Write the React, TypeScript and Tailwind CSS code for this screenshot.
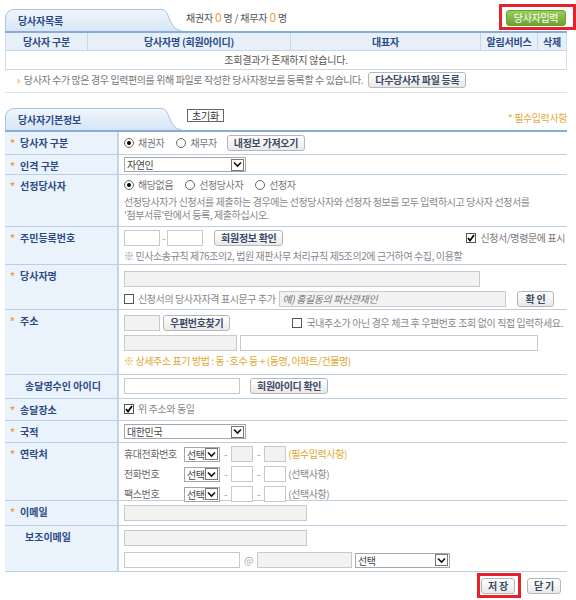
import React from "react";

const font = "font-['Noto_Sans_CJK_KR','Liberation_Sans',sans-serif]";

function Tab({ title, id }: { title: string; id: string }) {
  return (
    <div className="flex items-end h-[22px]">
      <div className="h-full w-[154px] rounded-tl-[9px] border-l border-t border-[#a9c3e0] bg-linear-to-b from-[#f1f6fc] to-[#d6e5f5] pl-[12px] flex items-center text-[10px] leading-none tracking-[-0.2px] font-bold text-[#2b4a85]">
        {title}
      </div>
      <svg width="22" height="22" viewBox="0 0 22 22" className="block">
        <defs>
          <linearGradient id={id} x1="0" y1="0" x2="0" y2="1">
            <stop offset="0" stopColor="#f1f6fc" />
            <stop offset="1" stopColor="#d6e5f5" />
          </linearGradient>
        </defs>
        <path d="M0 0.5 H3 C11 0.5 10 21.5 22 21.5 V22 H0 Z" fill={`url(#${id})`} />
        <path d="M0 0.5 H3 C11 0.5 10 21.5 22 21.5" stroke="#a9c3e0" fill="none" />
      </svg>
    </div>
  );
}

function Btn({ children, className = "" }: { children: React.ReactNode; className?: string }) {
  return (
    <button
      className={`h-[16px] px-[6px] rounded-[3px] border border-[#b7b7b7] bg-linear-to-b from-white to-[#e9e9e9] text-[10px] tracking-[-0.3px] leading-none font-bold text-[#3a4a66] whitespace-nowrap shrink-0 ${className}`}
    >
      {children}
    </button>
  );
}

function Radio({ checked }: { checked?: boolean }) {
  return (
    <span className="inline-flex w-[10px] h-[10px] rounded-full border border-[#666] bg-white items-center justify-center shrink-0">
      {checked && <span className="w-[4px] h-[4px] rounded-full bg-black" />}
    </span>
  );
}

function Check({ checked }: { checked?: boolean }) {
  return (
    <span className="inline-flex w-[10px] h-[10px] border border-[#555] bg-white items-center justify-center shrink-0">
      {checked && (
        <svg width="8" height="8" viewBox="0 0 8 8">
          <path d="M1 4 L3 6.5 L7 1" stroke="#000" strokeWidth="1.7" fill="none" />
        </svg>
      )}
    </span>
  );
}

function Select({ value, className }: { value: string; className: string }) {
  return (
    <div className={`flex h-[15px] border border-[#a7a7a7] bg-white items-center shrink-0 ${className}`}>
      <span className="flex-1 pl-[2px] text-[10px] leading-[13px] text-[#444] whitespace-nowrap">{value}</span>
      <span className="w-[13px] h-[12px] mr-[1px] border border-[#777] flex items-center justify-center shrink-0">
        <svg width="9" height="7" viewBox="0 0 9 7">
          <path d="M1 1.5 L4.5 5 L8 1.5" stroke="#111" strokeWidth="1.6" fill="none" />
        </svg>
      </span>
    </div>
  );
}

function Input({ className, gray }: { className: string; gray?: boolean }) {
  return (
    <div
      className={`h-[16px] shrink-0 border border-[#c9c9c9] ${gray ? "bg-[#f2f2f2]" : "bg-white"} ${className}`}
    />
  );
}

function Row({
  label,
  req = true,
  h,
  children,
}: {
  label: string;
  req?: boolean;
  h: string;
  children: React.ReactNode;
}) {
  return (
    <div className={`flex border-b border-[#bccfe2] ${h}`}>
      <div className="w-[114px] shrink-0 bg-[#eaf2fb] border-r-2 border-[#c2d5e8] flex pt-[6px] pl-[5px] text-[10px] tracking-[0px] font-bold text-[#2b4a85] leading-none whitespace-nowrap">
        <span className="w-[10px] text-[#f0a030]">{req ? "*" : ""}</span>
        <span className={req ? "" : "pl-[5px]"}>{label}</span>
      </div>
      <div className="flex-1 pl-[5px] pt-[3px] text-[10px] text-[#666] leading-none whitespace-nowrap">{children}</div>
    </div>
  );
}

export default function App() {
  return (
    <div className={`w-[576px] h-[600px] bg-white pl-[5px] pr-[9px] pt-[9px] tracking-[-0.4px] ${font}`}>
      {/* 당사자목록 */}
      <div className="flex items-end justify-between h-[22px]">
        <div className="flex items-end h-[22px]">
          <Tab title="당사자목록" id="t1" />
          <div className="self-start pt-[1px] pl-[5px] text-[10px] leading-[13px] text-[#555] whitespace-nowrap tracking-[-0.2px]">
            채권자 <span className="text-[#f0a030] text-[12px]">0</span> 명 / 채무자{" "}
            <span className="text-[#f0a030] text-[12px]">0</span> 명
          </div>
        </div>
        <div className="relative mb-[5px] mr-[1px]">
          <button className="block h-[16px] w-[60px] rounded-[3px] border border-[#6a9d32] bg-linear-to-b from-[#9ccd5c] to-[#6aa52c] text-[10px] tracking-[-0.3px] leading-none text-white whitespace-nowrap">
            당사자입력
          </button>
          <div className="absolute -left-[7px] -top-[6px] w-[77px] h-[26px] border-[3px] border-[#e3222b]" />
        </div>
      </div>
      <div className="border-t-2 border-[#87acd7]" />
      <div className="border-x border-[#d3dde8] text-[10px] tracking-[-0.2px] leading-none">
        <div className="flex h-[18px] bg-[#e7eff8] font-bold text-[#2b4a85] border-b border-[#c9d8e7] items-stretch whitespace-nowrap">
          <div className="w-[82px] flex items-center justify-center border-r border-[#c9d8e7]">당사자 구분</div>
          <div className="w-[203px] flex items-center justify-center border-r border-[#c9d8e7]">당사자명 (회원아이디)</div>
          <div className="w-[190px] flex items-center justify-center border-r border-[#c9d8e7]">대표자</div>
          <div className="w-[57px] flex items-center justify-center border-r border-[#c9d8e7]">알림서비스</div>
          <div className="flex-1 flex items-center justify-center">삭제</div>
        </div>
        <div className="h-[19px] flex items-center justify-center text-[#555] border-b border-[#c9d8e7]">
          조회결과가 존재하지 않습니다.
        </div>
      </div>
      <div className="flex items-center h-[20px] pl-[12px] text-[10px] leading-none text-[#777] whitespace-nowrap">
        <span className="text-[#f0a030] mr-[4px] text-[10px] font-bold">›</span>
        당사자 수가 많은 경우 입력편의를 위해 파일로 작성한 당사자정보를 등록할 수 있습니다.
        <Btn className="ml-[5px]">다수당사자 파일 등록</Btn>
      </div>
      <div className="border-t border-[#e3e3e3] mt-[2px]" />

      {/* 당사자기본정보 */}
      <div className="flex items-end justify-between mt-[15px] h-[22px]">
        <div className="flex items-end h-[22px]">
          <Tab title="당사자기본정보" id="t2" />
          <div className="self-start pl-[6px] pt-[1px]">
            <button className="block h-[13px] px-[4px] border border-[#666] bg-white text-[10px] tracking-[-0.2px] leading-none text-[#333] whitespace-nowrap">
              초기화
            </button>
          </div>
        </div>
        <div className="mb-[7px] text-[10px] leading-none text-[#e3a93a] whitespace-nowrap">* 필수입력사항</div>
      </div>
      <div className="border-t-2 border-[#87acd7]" />

      <Row label="당사자 구분" h="h-[23px]">
        <div className="flex items-center gap-[4px] text-[#777]">
          <Radio checked />
          <span>채권자</span>
          <span className="w-[4px]" />
          <Radio />
          <span>채무자</span>
          <Btn className="ml-[6px]">내정보 가져오기</Btn>
        </div>
      </Row>
      <Row label="인격 구분" h="h-[20px]">
        <Select value="자연인" className="w-[122px] mt-[-1px]" />
      </Row>
      <Row label="선정당사자" h="h-[52px]">
        <div className="flex items-center gap-[4px] text-[#777] pt-[2px]">
          <Radio checked />
          <span>해당없음</span>
          <span className="w-[4px]" />
          <Radio />
          <span>선정당사자</span>
          <span className="w-[4px]" />
          <Radio />
          <span>선정자</span>
        </div>
        <div className="mt-[5px] text-[#888] leading-[13px]">
          선정당사자가 신청서를 제출하는 경우에는 선정당사자와 선정자 정보를 모두 입력하시고 당사자 선정서를
          <br />
          '첨부서류'란에서 등록, 제출하십시오.
        </div>
      </Row>
      <Row label="주민등록번호" h="h-[38px]">
        <div className="flex items-center">
          <Input className="w-[36px]" />
          <span className="mx-[2px] text-[#999]">-</span>
          <Input className="w-[36px]" />
          <Btn className="ml-[11px]">회원정보 확인</Btn>
          <div className="ml-auto mr-[2px] flex items-center gap-[4px] text-[#777]">
            <Check checked />
            <span>신청서/명령문에 표시</span>
          </div>
        </div>
        <div className="mt-[5px] text-[#888]">
          ※ 민사소송규칙 제76조의2, 법원 재판사무 처리규칙 제5조의2에 근거하여 수집, 이용할
        </div>
      </Row>
      <Row label="당사자명" h="h-[45px]">
        <Input gray className="w-[356px] mt-[3px]" />
        <div className="flex items-center mt-[4px] text-[#888]">
          <Check />
          <span className="ml-[4px]">신청서의 당사자자격 표시문구 추가</span>
          <div className="ml-[3px] h-[16px] w-[227px] border border-[#c9c9c9] bg-[#f2f2f2] flex items-center pl-[3px] italic text-[#777] shrink-0">
            예) 홍길동의 파산관재인
          </div>
          <Btn className="ml-[11px] px-[8px]">확 인</Btn>
        </div>
      </Row>
      <Row label="주소" h="h-[65px]">
        <div className="flex items-center mt-[2px]">
          <Input gray className="w-[36px]" />
          <Btn className="ml-[3px]">우편번호찾기</Btn>
          <div className="ml-[62px] flex items-center gap-[4px] text-[#888]">
            <Check />
            <span>국내주소가 아닌 경우 체크 후 우편번호 조회 없이 직접 입력하세요.</span>
          </div>
        </div>
        <div className="flex items-center mt-[4px]">
          <Input gray className="w-[113px]" />
          <Input className="w-[298px] ml-[3px]" />
        </div>
        <div className="mt-[5px] text-[#e0a92e]">※ 상세주소 표기 방법 : 동·호수 등 + (동명, 아파트/건물명)</div>
      </Row>
      <Row label="송달영수인 아이디" req={false} h="h-[24px]">
        <div className="flex items-center">
          <Input className="w-[116px]" />
          <Btn className="ml-[10px]">회원아이디 확인</Btn>
        </div>
      </Row>
      <Row label="송달장소" h="h-[22px]">
        <div className="flex items-center gap-[4px] text-[#888] pt-[2px]">
          <Check checked />
          <span>위 주소와 동일</span>
        </div>
      </Row>
      <Row label="국적" h="h-[22px]">
        <Select value="대한민국" className="w-[122px]" />
      </Row>
      <Row label="연락처" h="h-[58px]">
        {[
          { t: "휴대전화번호", gray: true, note: "(필수입력사항)", c: "text-[#e0a92e]" },
          { t: "전화번호", gray: false, note: "(선택사항)", c: "text-[#888]" },
          { t: "팩스번호", gray: false, note: "(선택사항)", c: "text-[#888]" },
        ].map((r, i) => (
          <div key={i} className={`flex items-center ${i ? "mt-[4px]" : ""}`}>
            <span className="w-[60px] text-[#666]">{r.t}</span>
            <Select value="선택" className="w-[36px]" />
            <span className="mx-[4px] text-[#999]">-</span>
            <Input gray={r.gray} className="w-[22px]" />
            <span className="mx-[4px] text-[#999]">-</span>
            <Input gray={r.gray} className="w-[22px]" />
            <span className={`ml-[2px] ${r.c}`}>{r.note}</span>
          </div>
        ))}
      </Row>
      <Row label="이메일" h="h-[25px]">
        <Input gray className="w-[183px] mt-[1px]" />
      </Row>
      <Row label="보조이메일" req={false} h="h-[46px]">
        <Input gray className="w-[183px] mt-[1px]" />
        <div className="flex items-center mt-[6px]">
          <Input className="w-[116px]" />
          <span className="mx-[4px] text-[#aaa] text-[10px]">@</span>
          <Input gray className="w-[95px]" />
          <Select value="선택" className="w-[95px] ml-[3px]" />
        </div>
      </Row>

      <div className="flex justify-end mt-[6px] pr-[6px] gap-[12px]">
        <div className="relative">
          <Btn className="block w-[34px] px-0">저 장</Btn>
          <div className="absolute -left-[4px] -top-[5px] w-[44px] h-[25px] border-[3px] border-[#e3222b]" />
        </div>
        <Btn className="block w-[34px] px-0">닫 기</Btn>
      </div>
    </div>
  );
}
